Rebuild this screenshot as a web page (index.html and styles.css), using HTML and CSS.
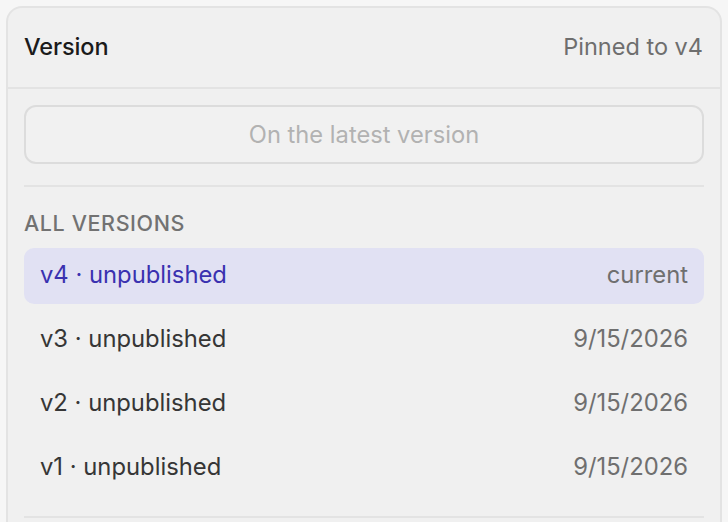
FILE: index.html
```html
<!DOCTYPE html>
<html lang="en">
<head>
<meta charset="utf-8">
<title>Version</title>
<link rel="stylesheet" href="styles.css">
</head>
<body>
<section class="panel">
  <header class="panel-head">
    <h2 class="title">Version</h2>
    <span class="pinned">Pinned to v4</span>
  </header>
  <div class="panel-body">
    <button class="latest" disabled>On the latest version</button>
    <hr class="divider">
    <div class="label">ALL VERSIONS</div>
    <ul class="versions">
      <li class="row active"><span class="name">v4 · unpublished</span><span class="meta">current</span></li>
      <li class="row"><span class="name">v3 · unpublished</span><span class="meta">9/15/2026</span></li>
      <li class="row"><span class="name">v2 · unpublished</span><span class="meta">9/15/2026</span></li>
      <li class="row"><span class="name">v1 · unpublished</span><span class="meta">9/15/2026</span></li>
    </ul>
    <hr class="divider bottom">
  </div>
</section>
</body>
</html>
```
FILE: styles.css
```css
html, body {
  margin: 0;
  padding: 0;
  background: #f6f6f6;
  font-family: Inter, "Noto Sans", "Liberation Sans", sans-serif;
  -webkit-font-smoothing: antialiased;
}
html {
  height: 522px;
  overflow: hidden;
}
body {
  padding: 6px 6px 0 6px;
  height: 522px;
  box-sizing: border-box;
  overflow: hidden;
}
.panel {
  background: #f0f0f0;
  border: 2px solid #e3e3e3;
  border-bottom: 0;
  border-radius: 16px 16px 0 0;
  height: 516px;
  box-sizing: border-box;
  overflow: hidden;
}
.panel-head {
  display: flex;
  align-items: center;
  justify-content: space-between;
  height: 77px;
  padding: 0 16px 2px 16px;
  border-bottom: 2px solid #e3e3e3;
}
.title {
  margin: 0;
  font-size: 23.5px;
  font-weight: 500;
  color: #1b1b1b;
  letter-spacing: -0.1px;
}
.pinned {
  font-size: 23.5px;
  color: #6e6e6e;
  margin-right: 1px;
}
.panel-body {
  padding: 16px 16px 0 16px;
}
.latest {
  display: block;
  width: 100%;
  height: 59px;
  margin: 0;
  border: 2px solid #dcdcdc;
  border-radius: 12px;
  background: #f1f1f1;
  color: #b2b2b2;
  font-family: inherit;
  font-size: 23.7px;
  font-weight: 400;
  padding: 0 0 1px 0;
}
.divider {
  border: 0;
  border-top: 2px solid #e3e3e3;
  margin: 21px 0 0 0;
  height: 0;
}
.label {
  margin-top: 22px;
  height: 28px;
  line-height: 28px;
  font-size: 21.5px;
  font-weight: 500;
  color: #727272;
  letter-spacing: 0.6px;
}
.versions {
  list-style: none;
  margin: 11px 0 0 0;
  padding: 0;
  display: flex;
  flex-direction: column;
  gap: 8px;
}
.row {
  display: flex;
  align-items: center;
  justify-content: space-between;
  box-sizing: border-box;
  height: 56px;
  padding: 0 16px 3px 16px;
  border-radius: 10px;
  font-size: 23.8px;
}
.name {
  color: #363636;
}
.meta {
  color: #6f6f6f;
}
.row.active {
  background: #e1e1f3;
}
.row.active .name {
  color: #3a31b0;
}
.divider.bottom {
  margin-top: 20px;
}
```
